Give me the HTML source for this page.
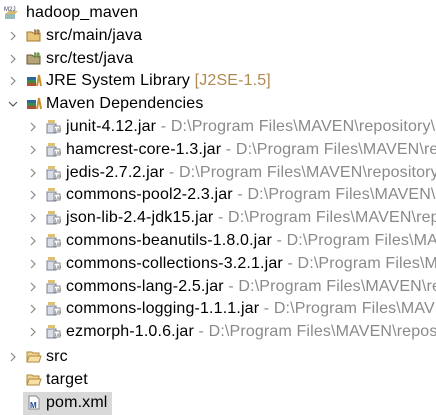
<!DOCTYPE html>
<html><head><style>
body{margin:0;width:436px;height:415px;overflow:hidden;background:#fff;font-family:"Liberation Sans","Noto Sans CJK SC",sans-serif;font-size:16px;color:#000;position:relative}
.r{position:absolute;height:23px;line-height:23px;white-space:nowrap;left:0;width:436px;overflow:hidden;letter-spacing:0.15px}
.a{position:absolute;top:7px;width:8px;height:10px}
.i{position:absolute;top:4px;width:16px;height:15px}
.t{position:absolute;top:0}
.g{color:#8a8a8a}.b{color:#b08a50}
</style></head><body>
<div class="r" style="top:1px"><svg class="i" style="left:4px" viewBox="0 0 16 15"><text x="0" y="6" font-size="6" fill="#335">M2J</text><path d="M1 9h10l3-3H5z" fill="#d9b870"/><path d="M1 9h10v5H1z" fill="#9bb"/></svg><span class="t" style="left:26px">hadoop_maven</span></div>

<div class="r" style="top:24px"><svg class="a" style="left:9px" viewBox="0 0 8 10"><path d="M2 1l4 4-4 4" stroke="#8a8a8a" fill="none" stroke-width="1.2"/></svg><svg class="i" style="left:26px" viewBox="0 0 16 15"><path d="M1 4h5l1 1h7v8H1z" fill="#e8c677" stroke="#a0782a"/><path d="M9 1v6M12 1v6M8 3h6M8 5h6" stroke="#8a5a20"/></svg><span class="t" style="left:46px">src/main/java</span></div>
<div class="r" style="top:47px"><svg class="a" style="left:9px" viewBox="0 0 8 10"><path d="M2 1l4 4-4 4" stroke="#8a8a8a" fill="none" stroke-width="1.2"/></svg><svg class="i" style="left:26px" viewBox="0 0 16 15"><path d="M1 4h5l1 1h7v8H1z" fill="#b5a37a" stroke="#6a5a30"/><path d="M9 1v6M12 1v6M8 3h6M8 5h6" stroke="#4a7a20"/></svg><span class="t" style="left:46px">src/test/java</span></div>
<div class="r" style="top:69px"><svg class="a" style="left:9px" viewBox="0 0 8 10"><path d="M2 1l4 4-4 4" stroke="#8a8a8a" fill="none" stroke-width="1.2"/></svg><svg class="i" style="left:26px" viewBox="0 0 16 15"><rect x="1" y="4" width="9" height="3" fill="#2a6a9a"/><rect x="1" y="7" width="9" height="3" fill="#3a8a4a"/><rect x="1" y="10" width="9" height="3" fill="#b05030"/><path d="M11 13l2-11 2 11" stroke="#c89030" stroke-width="2" fill="none"/></svg><span class="t" style="left:46px">JRE System Library <span class="b">[J2SE-1.5]</span></span></div>
<div class="r" style="top:92px"><svg class="a" style="left:8px;width:10px;height:8px;top:8px" viewBox="0 0 10 8"><path d="M1 2l4 4 4-4" stroke="#555" fill="none" stroke-width="1.2"/></svg><svg class="i" style="left:26px" viewBox="0 0 16 15"><rect x="1" y="4" width="9" height="3" fill="#2a6a9a"/><rect x="1" y="7" width="9" height="3" fill="#3a8a4a"/><rect x="1" y="10" width="9" height="3" fill="#b05030"/><path d="M11 13l2-11 2 11" stroke="#c89030" stroke-width="2" fill="none"/></svg><span class="t" style="left:46px">Maven Dependencies</span></div>

<div id="jars"></div>
<div class="r" style="top:345px"><svg class="a" style="left:9px" viewBox="0 0 8 10"><path d="M2 1l4 4-4 4" stroke="#8a8a8a" fill="none" stroke-width="1.2"/></svg><svg class="i" style="left:26px" viewBox="0 0 16 15"><path d="M1 3h5l1 1h6v9H1z" fill="#f0d290" stroke="#b08a3a"/><path d="M1 13l2-6h12l-2 6z" fill="#f6e0a8" stroke="#b08a3a"/></svg><span class="t" style="left:46px">src</span></div>
<div class="r" style="top:368px"><svg class="i" style="left:26px" viewBox="0 0 16 15"><path d="M1 3h5l1 1h6v9H1z" fill="#f0d290" stroke="#b08a3a"/><path d="M1 13l2-6h12l-2 6z" fill="#f6e0a8" stroke="#b08a3a"/></svg><span class="t" style="left:46px">target</span></div>
<div style="position:absolute;left:23px;top:392px;width:89px;height:23px;background:#d9d9d9"></div>
<div class="r" style="top:391px"><svg class="i" style="left:26px" viewBox="0 0 16 15"><path d="M3 1h7l3 3v10H3z" fill="#fff" stroke="#888"/><text x="4" y="13" font-size="8" font-weight="bold" fill="#1a4a9a">M</text></svg><span class="t" style="left:46px">pom.xml</span></div>

<script>
var j=["junit-4.12.jar","hamcrest-core-1.3.jar","jedis-2.7.2.jar","commons-pool2-2.3.jar","json-lib-2.4-jdk15.jar","commons-beanutils-1.8.0.jar","commons-collections-3.2.1.jar","commons-lang-2.5.jar","commons-logging-1.1.1.jar","ezmorph-1.0.6.jar"];
var h="";
for(var k=0;k<j.length;k++){
h+='<div class="r" style="top:'+(115+Math.round(k*22.8))+'px"><svg class="a" style="left:29px" viewBox="0 0 8 10"><path d="M2 1l4 4-4 4" stroke="#8a8a8a" fill="none" stroke-width="1.2"/></svg><svg class="i" style="left:45px" viewBox="0 0 16 15"><rect x="3" y="1" width="7" height="3" fill="#e0c070"/><path d="M2 5h9v9H2z" fill="#d8dde8" stroke="#7a8090"/><rect x="9" y="7" width="6" height="6" fill="#fff" stroke="#888"/><text x="9.5" y="12" font-size="4" fill="#333">101</text></svg><span class="t" style="left:66px">'+j[k]+' <span class="g">- D:\\Program Files\\MAVEN\\repository\\</span></span></div>';}
document.getElementById("jars").outerHTML=h;
</script>
</body></html>
